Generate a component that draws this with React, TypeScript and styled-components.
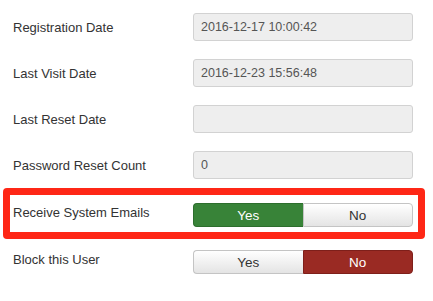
import React from "react"
import styled, {createGlobalStyle} from "styled-components"

const GlobalStyle = createGlobalStyle`
  body {
    margin: 0;
    background: #ffffff;
    font-family: "Liberation Sans", Arial, Helvetica, sans-serif;
  }
`

const Form = styled.div`
  width: 422px;
  padding: 4px 0 0 3px;
  display: flex;
  flex-direction: column;
`

const Row = styled.div<{$highlight?: boolean}>`
  display: flex;
  align-items: center;
  ${(props) =>
    props.$highlight
      ? `border: 7px solid #fe2716;
         border-radius: 4px;
         padding: 8px 5px 5px 3px;`
      : `height: 46px;
         padding: 0 12px 0 10px;`}
`

const Label = styled.div<{$raised?: boolean}>`
  width: 180px;
  font-size: 13px;
  color: #333333;
  padding-bottom: ${(props) => (props.$raised ? "5px" : "0")};
`

const TextBox = styled.input`
  box-sizing: border-box;
  width: 220px;
  height: 28px;
  margin: 0;
  padding: 0 7px;
  border: 1px solid #d2d2d2;
  border-radius: 3px;
  background: #eeeeee;
  font-family: "Liberation Sans", Arial, Helvetica, sans-serif;
  font-size: 12.5px;
  color: #555555;
  outline: none;
`

const Toggle = styled.div`
  display: flex;
  width: 220px;
  height: 24px;
`

const Choice = styled.div<{$active?: "yes" | "no"; $side: "left" | "right"}>`
  flex: 1;
  display: flex;
  align-items: center;
  justify-content: center;
  font-size: 13.5px;
  box-sizing: border-box;
  border: 1px solid #c4c4c4;
  border-radius: ${(props) => (props.$side === "left" ? "4px 0 0 4px" : "0 4px 4px 0")};
  ${(props) => (props.$side === "left" ? "border-right: none;" : "")}
  color: ${(props) => (props.$active ? "#ffffff" : "#333333")};
  background: ${(props) =>
    props.$active === "yes"
      ? "#388338"
      : props.$active === "no"
        ? "#9a2a23"
        : "linear-gradient(#ffffff, #e4e4e4)"};
  ${(props) =>
    props.$active === "yes"
      ? "border-color: #2d6e2d;"
      : props.$active === "no"
        ? "border-color: #7e1f1a;"
        : ""}
`

const fields = [
  {label: "Registration Date", value: "2016-12-17 10:00:42"},
  {label: "Last Visit Date", value: "2016-12-23 15:56:48"},
  {label: "Last Reset Date", value: ""},
  {label: "Password Reset Count", value: "0"},
]

export default function App() {
  return (
    <>
      <GlobalStyle />
      <Form>
        {fields.map((f) => (
          <Row key={f.label}>
            <Label>{f.label}</Label>
            <TextBox readOnly value={f.value} />
          </Row>
        ))}
        <Row $highlight>
          <Label $raised>Receive System Emails</Label>
          <Toggle>
            <Choice $side="left" $active="yes">Yes</Choice>
            <Choice $side="right">No</Choice>
          </Toggle>
        </Row>
        <Row>
          <Label $raised>Block this User</Label>
          <Toggle>
            <Choice $side="left">Yes</Choice>
            <Choice $side="right" $active="no">No</Choice>
          </Toggle>
        </Row>
      </Form>
    </>
  )
}
